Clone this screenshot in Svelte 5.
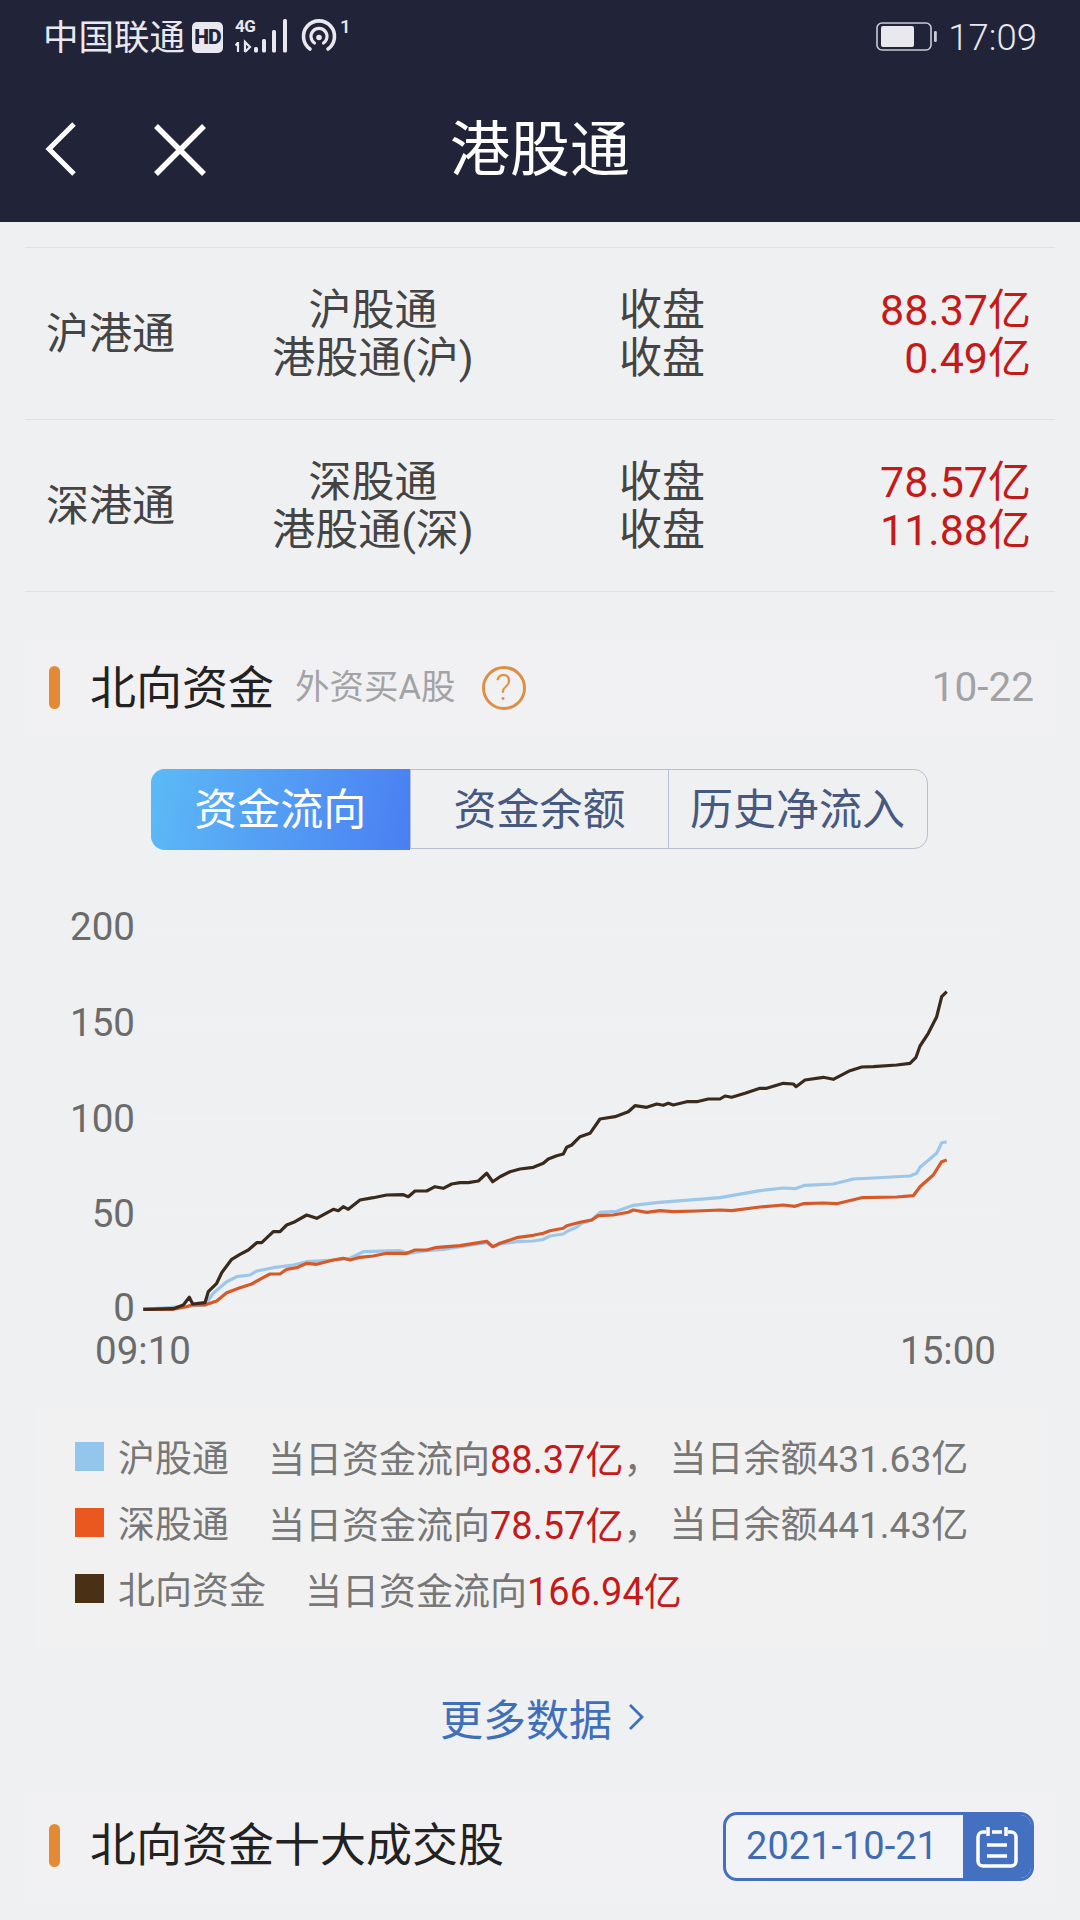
<script>
  const a3 = (p) => p.map(([x, y]) => [60 + x / 3, 900 + y / 3]);
  const a4 = (p) => p.map(([x, y]) => [500 + x / 3, 960 + y / 3]);
  const str = (p) => p.map(([x, y]) => x.toFixed(1) + ',' + y.toFixed(1)).join(' ');

  const black = str([
    ...a3([[250,1228],[340,1226],[370,1215],[388,1192],[398,1212],[435,1208],[445,1175],[470,1150],[485,1118],[515,1078],[540,1063],[565,1050],[590,1028],[605,1028],[640,995],[660,995],[680,975],[705,965],[740,945],[770,955],[820,928],[835,932],[850,920],[865,928],[900,900],[940,893],[980,885],[1030,884],[1045,890],[1065,873],[1100,873],[1125,860],[1150,865],[1175,852],[1200,848],[1225,848],[1255,843],[1280,820],[1298,845]]),
    ...a4([[0,650],[30,635],[60,627],[100,622],[130,610],[145,597],[170,587],[190,582],[200,562],[215,555],[240,530],[270,520],[300,477],[345,470],[385,455],[405,437],[440,442],[470,432],[490,436],[505,430],[520,435],[560,425],[590,425],[625,417],[660,417],[675,408],[695,412],[735,400],[780,385],[800,385],[850,370],[880,372],[888,380],[915,360],[970,352],[1000,358],[1050,332],[1085,321],[1120,320],[1190,315],[1230,310],[1248,292],[1260,258],[1285,220],[1310,170],[1325,110],[1340,95]])
  ]);
  const orange = str([
    ...a3([[250,1228],[340,1228],[380,1220],[395,1215],[435,1215],[470,1203],[500,1178],[540,1163],[575,1152],[605,1135],[630,1122],[660,1122],[680,1108],[710,1103],[740,1090],[770,1093],[820,1080],[850,1075],[870,1080],[900,1072],[940,1068],[980,1060],[1040,1060],[1065,1050],[1100,1050],[1125,1043],[1200,1037],[1280,1024],[1298,1040]]),
    ...a4([[0,850],[50,833],[100,826],[130,820],[150,812],[190,805],[200,797],[240,787],[275,780],[295,767],[340,765],[385,757],[400,750],[440,757],[480,752],[520,755],[590,753],[660,750],[695,752],[780,741],[850,735],[885,739],[910,731],[970,729],[1010,731],[1085,713],[1190,711],[1240,707],[1260,680],[1300,645],[1325,605],[1340,600]])
  ]);
  const blue = str([
    ...a3([[250,1228],[435,1215],[460,1180],[500,1145],[530,1130],[570,1125],[590,1113],[640,1103],[700,1095],[740,1085],[820,1080],[870,1075],[910,1055],[1020,1052],[1045,1060],[1100,1052],[1150,1048],[1200,1040],[1280,1028],[1298,1040]]),
    ...a4([[0,852],[50,845],[100,843],[130,838],[150,828],[190,822],[205,812],[230,802],[245,790],[275,780],[300,757],[350,754],[400,736],[470,728],[660,713],[780,692],[850,684],[885,686],[915,676],[1000,672],[1060,657],[1120,654],[1230,648],[1250,640],[1260,622],[1310,580],[1325,548],[1340,545]])
  ]);

  const ticks = [
    { label: '200', y: 930, base: 940 },
    { label: '150', y: 1024, base: 1036 },
    { label: '100', y: 1119, base: 1132 },
    { label: '50', y: 1214, base: 1227 },
    { label: '0', y: 1309, base: 1321 }
  ];
  const rows = [
    { name: '沪港通', a: '沪股通', b: '港股通(沪)', va: '88.37亿', vb: '0.49亿' },
    { name: '深港通', a: '深股通', b: '港股通(深)', va: '78.57亿', vb: '11.88亿' }
  ];
</script>

<div class="page">
  <header class="top">
    <div class="status">
      <span class="carrier">中国联通</span>
      <span class="hd">HD</span>
      <svg class="signal" width="56" height="52" viewBox="235 11 56 52">
        <text x="235" y="32" class="net">4G</text>
        <path d="M238 42v10M235.500 45.500l2.500-3M245 52v-10l5 5-5 5" fill="none" stroke="#e8e8ee" stroke-width="2.200"/>
        <rect x="254" y="47" width="4" height="5.500" rx="1.500" fill="#e8e8ee"/>
        <rect x="262" y="39" width="4" height="13.500" rx="1.500" fill="#e8e8ee"/>
        <rect x="272" y="30" width="4" height="22.500" rx="1.500" fill="#e8e8ee"/>
        <rect x="283" y="19" width="4" height="33.500" rx="1.500" fill="#e8e8ee"/>
      </svg>
      <svg class="hotspot" width="52" height="52" viewBox="300 11 52 52">
        <path d="M310 49a15.500 15.500 0 1 1 18 0" fill="none" stroke="#e8e8ee" stroke-width="3.600" stroke-linecap="round"/>
        <path d="M314.500 43a8 8 0 1 1 9 0" fill="none" stroke="#e8e8ee" stroke-width="3.200" stroke-linecap="round"/>
        <circle cx="319" cy="37.500" r="2.800" fill="#e8e8ee"/>
        <text x="340" y="33" class="net one">1</text>
      </svg>
      <span class="spacer"></span>
      <svg class="battery" width="62" height="30" viewBox="0 0 62 30">
        <rect x="1" y="1" width="54" height="27" rx="5" fill="none" stroke="#c9cbd6" stroke-width="1.600"/>
        <rect x="5" y="4" width="33" height="21" rx="2" fill="#e8e8ee"/>
        <rect x="58" y="9" width="2.800" height="11" rx="1.200" fill="#c9cbd6"/>
      </svg>
      <span class="time">17:09</span>
    </div>
    <nav class="nav">
      <svg class="back" width="32" height="56" viewBox="0 0 32 56">
        <path d="M29 3 4 28 29 53" fill="none" stroke="#fff" stroke-width="5"/>
      </svg>
      <svg class="close" width="54" height="54" viewBox="0 0 54 54">
        <path d="M3 3 51 51M51 3 3 51" fill="none" stroke="#fff" stroke-width="5.500"/>
      </svg>
      <h1>港股通</h1>
    </nav>
  </header>

  <section class="table">
    {#each rows as r}
      <div class="row">
        <div class="name">{r.name}</div>
        <div class="mid"><div>{r.a}</div><div>{r.b}</div></div>
        <div class="mid"><div>收盘</div><div>收盘</div></div>
        <div class="val"><div>{r.va}</div><div>{r.vb}</div></div>
      </div>
    {/each}
  </section>

  <div class="sec first">
    <i class="bar"></i>
    <span class="title">北向资金</span>
    <span class="sub">外资买A股</span>
    <span class="q">?</span>
    <span class="spacer"></span>
    <span class="date">10-22</span>
  </div>

  <div class="tabs">
    <div class="tab on">资金流向</div>
    <div class="tab">资金余额</div>
    <div class="tab">历史净流入</div>
  </div>

  <svg class="chart" width="1080" height="490" viewBox="0 890 1080 490">
    {#each ticks as t}
      <line x1="145" x2="1000" y1={t.y} y2={t.y} stroke="#f2f2f2" stroke-width="1.500"/>
      <text x="135" y={t.base} text-anchor="end" class="axis">{t.label}</text>
    {/each}
    <text x="143" y="1364" text-anchor="middle" class="axis">09:10</text>
    <text x="948" y="1364" text-anchor="middle" class="axis">15:00</text>
    <polyline points={blue} fill="none" stroke="#9cc7ea" stroke-width="3.200" stroke-linejoin="round"/>
    <polyline points={orange} fill="none" stroke="#d6592a" stroke-width="3.200" stroke-linejoin="round"/>
    <polyline points={black} fill="none" stroke="#3a2a1c" stroke-width="3.200" stroke-linejoin="round"/>
  </svg>

  <div class="legend">
    <div class="lrow">
      <i class="sw" style="background:#94c6ec"></i><span>沪股通</span>
      <span class="g1">当日资金流向<b>88.37亿</b>，</span>
      <span class="g2">当日余额431.63亿</span>
    </div>
    <div class="lrow">
      <i class="sw" style="background:#ea581f"></i><span>深股通</span>
      <span class="g1">当日资金流向<b>78.57亿</b>，</span>
      <span class="g2">当日余额441.43亿</span>
    </div>
    <div class="lrow">
      <i class="sw" style="background:#4a3015"></i><span>北向资金</span>
      <span class="g1">当日资金流向<b>166.94亿</b></span>
    </div>
  </div>

  <div class="more">
    <span>更多数据</span>
    <svg width="16" height="30" viewBox="0 0 16 30"><path d="M2 3 14 15 2 27" fill="none" stroke="#3f6fb8" stroke-width="2.800"/></svg>
  </div>

  <div class="sec last">
    <i class="bar"></i>
    <span class="title">北向资金十大成交股</span>
    <span class="spacer"></span>
    <div class="picker">
      <span class="pdate">2021-10-21</span>
      <span class="pbtn">
        <svg width="44" height="42" viewBox="0 0 44 42">
          <path d="M11 6H8a5 5 0 0 0-5 5v24a5 5 0 0 0 5 5h28a5 5 0 0 0 5-5V11a5 5 0 0 0-5-5h-3" fill="none" stroke="#fff" stroke-width="3.500"/>
          <path d="M13 1v9M31 1v9M17 6h10M12 19h20M12 30h20" fill="none" stroke="#fff" stroke-width="3.500"/>
        </svg>
      </span>
    </div>
  </div>
</div>

<style>
  :global(body) {
    margin: 0;
    background: #eff0f1;
  }
  .page {
    width: 1080px;
    height: 1920px;
    overflow: hidden;
    display: flex;
    flex-direction: column;
    background: #eff0f1;
    font-family: Roboto, "Noto Sans CJK SC", sans-serif;
    color: #444;
  }
  .top {
    height: 222px;
    flex: none;
    background: #212338;
    color: #fff;
    display: flex;
    flex-direction: column;
  }
  .status {
    height: 74px;
    padding: 0 43px 0 45px;
    display: flex;
    align-items: center;
    color: #e8e8ee;
  }
  .carrier {
    font-size: 35.500px;
    line-height: 74px;
    width: 147px;
    margin-left: -2px;
    padding-right: 2px;
    white-space: nowrap;
    margin-top: 2px;
  }
  .hd {
    width: 31px;
    height: 31px;
    border-radius: 5px;
    background: #e8e8ee;
    color: #212338;
    font-size: 21px;
    font-weight: 900;
    line-height: 31px;
    text-align: center;
    letter-spacing: -1px;
  }
  .signal {
    margin-left: 12px;
  }
  .hotspot {
    margin-left: 9px;
  }
  .net {
    font-family: Roboto, sans-serif;
    font-size: 17px;
    font-weight: 700;
    letter-spacing: -0.5px;
    fill: #e8e8ee;
  }
  .one {
    font-size: 19px;
    font-weight: 500;
  }
  .spacer {
    flex: 1;
  }
  .battery {
    margin-right: 10px;
  }
  .time {
    font-size: 36.500px;
    font-weight: 300;
  }
  .nav {
    flex: 1;
    position: relative;
    display: flex;
    align-items: center;
    padding: 0 0 0 45px;
    margin-top: 1px;
  }
  .close {
    margin-left: 76px;
    margin-top: 2px;
  }
  .nav h1 {
    position: absolute;
    left: 0;
    right: 0;
    margin: 4px 0 0;
    text-align: center;
    font-size: 60px;
    font-weight: 400;
    line-height: 1;
  }
  .table {
    margin: 25px 25px 0;
    border-top: 1px solid #e1e2e4;
  }
  .row {
    height: 171px;
    border-bottom: 1px solid #e1e2e4;
    display: grid;
    grid-template-columns: 184px 286px 292px 223px;
    padding: 0 23px 0 21px;
    align-items: center;
    font-size: 43px;
    line-height: 48px;
    color: #444;
  }
  .mid {
    text-align: center;
  }
  .val {
    text-align: right;
    color: #c41a1a;
  }
  .sec {
    margin: 0 25px;
    height: 95px;
    flex: none;
    background: #f1f1f3;
    display: flex;
    align-items: center;
    padding: 0 21px 0 24px;
  }
  .first {
    margin-top: 48px;
  }
  .last {
    height: 104px;
    margin-top: 55px;
  }
  .bar {
    width: 11px;
    height: 43px;
    border-radius: 6px;
    background: #e28a36;
  }
  .title {
    font-size: 46px;
    color: #222;
    margin-left: 30px;
    line-height: 1;
  }
  .sub {
    font-size: 34.500px;
    color: #a3a3a5;
    margin-left: 21px;
    line-height: 1;
  }
  .q {
    width: 38px;
    height: 38px;
    margin-left: 26px;
    border: 3px solid #dd8f45;
    border-radius: 50%;
    color: #dd8f45;
    font-size: 36px;
    font-weight: 300;
    line-height: 38px;
    text-align: center;
  }
  .date {
    font-size: 40.500px;
    color: #a2a2a4;
    margin-top: -2px;
  }
  .tabs {
    margin: 34px 0 0 151px;
    width: 777px;
    height: 80px;
    flex: none;
    box-sizing: border-box;
    display: grid;
    grid-template-columns: 258px 258px 258px;
    border-radius: 14px;
    border: 1.500px solid #b6c0d2;
    font-size: 43px;
    color: #47597f;
  }
  .tab {
    display: flex;
    align-items: center;
    justify-content: center;
    border-left: 1.500px solid #b6c0d2;
    padding-bottom: 7px;
    box-sizing: border-box;
  }
  .tab:first-child {
    border-left: 0;
  }
  .tab.on {
    margin: -1.500px 0 -1.500px -1.500px;
    border-radius: 14px 0 0 14px;
    background: linear-gradient(100deg, #5cbaf6, #4a7ff2);
    color: #fff;
  }
  .chart {
    display: block;
    flex: none;
    margin-top: 41px;
  }
  .axis {
    font-family: Roboto, sans-serif;
    font-size: 38.500px;
    fill: #6b6b6b;
  }
  .legend {
    margin: 28px 39px 0 37px;
    height: 239px;
    flex: none;
    box-sizing: border-box;
    background: #f1f1f2;
    padding: 15px 0 0 38px;
    font-size: 37px;
    color: #777;
  }
  .lrow {
    display: flex;
    align-items: center;
    height: 66px;
    white-space: nowrap;
  }
  .sw {
    width: 29px;
    height: 29px;
    margin-right: 14px;
    flex: none;
  }
  .lrow b {
    font-weight: 400;
    font-size: 38px;
    color: #c41a1a;
  }
  .g1 {
    margin-left: 39px;
  }
  .g2 {
    margin-left: 9px;
  }
  .more {
    flex: none;
    height: 42px;
    margin-top: 49px;
    display: flex;
    align-items: center;
    justify-content: center;
    gap: 16px;
    padding-left: 4px;
    font-size: 43px;
    color: #3f6fb8;
  }
  .picker {
    width: 311px;
    height: 69px;
    margin-top: 3px;
    box-sizing: border-box;
    border: 3px solid #4370c0;
    border-radius: 14px;
    display: flex;
    overflow: hidden;
    background: #f2f3f7;
  }
  .pdate {
    width: 237px;
    padding-right: 5px;
    box-sizing: border-box;
    text-align: center;
    font-size: 38px;
    line-height: 63px;
    color: #3f6cb0;
  }
  .pbtn {
    flex: 1;
    background: #4370c0;
    display: flex;
    align-items: center;
    justify-content: center;
  }
</style>
